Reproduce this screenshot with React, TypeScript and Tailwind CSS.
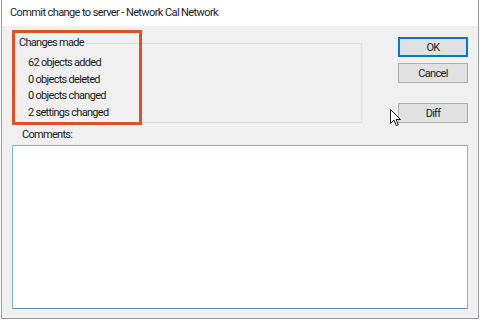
import React from "react";

function Cursor() {
  return (
    <svg
      className="absolute left-[390px] top-[109px]"
      width="12"
      height="18"
      viewBox="0 0 12 18"
    >
      <path
        d="M0.5 0.5 L0.5 14.5 L4 11.2 L6.3 16.6 L8.3 15.8 L6 10.5 L10.5 10.5 Z"
        fill="#ffffff"
        stroke="#1a1a1a"
        strokeWidth="1"
        strokeLinejoin="round"
      />
    </svg>
  );
}

export default function App() {
  const font = { fontFamily: 'Roboto, "Noto Sans", Arial, sans-serif' };
  return (
    <div className="relative w-[480px] h-[321px] bg-white overflow-hidden" style={font}>
      <div className="ml-[1px] w-[478px] h-[319px] border-x border-b border-[#9a9a9a] flex flex-col">
        <div className="h-[26px] bg-white flex items-center pl-[8px] text-[11px] tracking-[-0.6px] text-[#1a1a1a]">
          Commit change to server - Network Cal Network
        </div>
        <div className="flex-1 bg-[#f0f0f0] flex flex-col text-[11px] tracking-[-0.7px] text-[#1a1a1a]">
          <div className="flex">
            <fieldset className="ml-[11px] mt-[9px] w-[349px] h-[88px] border border-[#dcdcdc] px-[5px]">
              <legend className="px-0 leading-[16px]">Changes made</legend>
              <div className="pl-[9px] pt-[4px] leading-[16.5px]">
                <div>62 objects added</div>
                <div>0 objects deleted</div>
                <div>0 objects changed</div>
                <div>2 settings changed</div>
              </div>
            </fieldset>
            <div className="ml-[36px] mt-[11px] flex flex-col w-[70px]">
              <button className="h-[20px] w-[70px] bg-[#e1e1e1] border border-[#0078d7] shadow-[inset_0_0_0_1px_#0078d7] leading-none">
                OK
              </button>
              <button className="mt-[6px] h-[20px] w-[70px] bg-[#e1e1e1] border border-[#adadad] leading-none">
                Cancel
              </button>
              <button className="mt-[20px] h-[20px] w-[70px] bg-[#e1e1e1] border border-[#adadad] leading-none">
                Diff
              </button>
            </div>
          </div>
          <div className="ml-[20px] mt-[4px] leading-[16px]">Comments:</div>
          <div className="ml-[10px] mt-[2px] w-[456px] h-[164px] bg-white border border-[#7fb1d3] border-b-[#5b8db3]" />
        </div>
      </div>
      <div className="absolute left-[12px] top-[30px] w-[130px] h-[95px] border-[3px] border-[#e14f24]" />
      <Cursor />
    </div>
  );
}
